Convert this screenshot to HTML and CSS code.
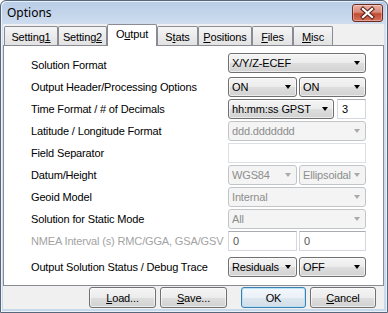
FILE: index.html
```html
<!DOCTYPE html>
<html lang="en">
<head>
    <meta charset="UTF-8">
    <title>Options</title>
    <link rel="stylesheet" href="styles.css">
</head>
<body>
    <div class="window">
        <div class="titlebar">
            <span class="title">Options</span>
            <span class="close">
                <svg width="29" height="16" viewBox="0 0 29 16">
                    <path d="M10 4 L19 12 M19 4 L10 12" stroke="#5a2218" stroke-width="4.2" stroke-linecap="square"/>
                    <path d="M10 4 L19 12 M19 4 L10 12" stroke="#fff" stroke-width="2.2" stroke-linecap="square"/>
                </svg>
            </span>
        </div>
        <div class="client">
            <div class="tabs">
                <div class="tab t-setting1">Setting<u>1</u></div>
                <div class="tab t-setting2">Setting<u>2</u></div>
                <div class="tab t-output active">O<u>u</u>tput</div>
                <div class="tab t-stats">S<u>t</u>ats</div>
                <div class="tab t-positions"><u>P</u>ositions</div>
                <div class="tab t-files"><u>F</u>iles</div>
                <div class="tab t-misc"><u>M</u>isc</div>
            </div>
            <div class="panel">
                <div class="form">
                    <div class="label">Solution Format</div>
                    <div class="combo first"><span>X/Y/Z-ECEF</span><i class="arrow"></i></div>

                    <div class="label">Output Header/Processing Options</div>
                    <div class="pair">
                        <div class="combo half"><span>ON</span><i class="arrow"></i></div>
                        <div class="combo half2"><span>ON</span><i class="arrow"></i></div>
                    </div>

                    <div class="label">Time Format / # of Decimals</div>
                    <div class="pair wide-gap">
                        <div class="combo time"><span>hh:mm:ss GPST</span><i class="arrow"></i></div>
                        <div class="edit small">3</div>
                    </div>

                    <div class="label">Latitude / Longitude Format</div>
                    <div class="combo disabled"><span>ddd.ddddddd</span><i class="arrow"></i></div>

                    <div class="label">Field Separator</div>
                    <div class="edit disabled-edit"></div>

                    <div class="label">Datum/Height</div>
                    <div class="pair">
                        <div class="combo disabled half"><span>WGS84</span><i class="arrow"></i></div>
                        <div class="combo disabled half2"><span>Ellipsoidal</span><i class="arrow"></i></div>
                    </div>

                    <div class="label">Geoid Model</div>
                    <div class="combo disabled"><span>Internal</span><i class="arrow"></i></div>

                    <div class="label">Solution for Static Mode</div>
                    <div class="combo disabled"><span>All</span><i class="arrow"></i></div>

                    <div class="label grey">NMEA Interval (s) RMC/GGA, GSA/GSV</div>
                    <div class="pair">
                        <div class="edit half nmea">0</div>
                        <div class="edit half2 nmea">0</div>
                    </div>

                    <div class="label">Output Solution Status / Debug Trace</div>
                    <div class="pair">
                        <div class="combo half"><span>Residuals</span><i class="arrow"></i></div>
                        <div class="combo half2"><span>OFF</span><i class="arrow"></i></div>
                    </div>
                </div>
            </div>
            <div class="buttons">
                <div class="button b-load"><u>L</u>oad...</div>
                <div class="button b-save"><u>S</u>ave...</div>
                <div class="button b-ok default">OK</div>
                <div class="button b-cancel"><u>C</u>ancel</div>
            </div>
        </div>
    </div>
</body>
</html>
```

FILE: styles.css
```css
body {
    margin: 0;
    font-family: "Liberation Sans", Arial, sans-serif;
    font-size: 11px;
    letter-spacing: -0.15px;
    color: #000;
    background: #fff;
}
.window {
    width: 388px;
    height: 313px;
    box-sizing: border-box;
    border: 1px solid #56667b;
    border-radius: 6px 6px 0 0;
    background: linear-gradient(#b8cce6, #d3e0f0 28px, #c9d9ec);
    box-shadow: inset 1px 1px 0 rgba(255, 255, 255, 0.7), inset -1px -1px 0 rgba(255, 255, 255, 0.6);
    display: flex;
    flex-direction: column;
}
.titlebar {
    height: 23px;
    display: flex;
    justify-content: space-between;
    align-items: flex-start;
    padding: 0 4px 0 6px;
}
.title {
    font-family: "Noto Sans", sans-serif;
    font-size: 12px;
    letter-spacing: 0;
    line-height: 23px;
}
.close {
    margin-top: 3px;
    width: 31px;
    height: 18px;
    box-sizing: border-box;
    border: 1px solid #6e2a1e;
    border-radius: 3px;
    background: linear-gradient(#eab0a2, #d88a78 45%, #c24a32 55%, #d5735c);
    box-shadow: inset 0 0 0 1px rgba(255, 255, 255, 0.35);
}
.close svg {
    display: block;
}
.client {
    flex: 1;
    margin: 0 3px 3px 2px;
    background: #f0f0f0;
    display: flex;
    flex-direction: column;
}
.tabs {
    display: flex;
    align-items: flex-end;
    height: 21px;
    padding-left: 1px;
}
.tab {
    height: 19px;
    box-sizing: border-box;
    border: 1px solid #898c95;
    border-bottom: none;
    border-radius: 2px 2px 0 0;
    background: linear-gradient(#f5f5f5, #e2e2e2);
    display: flex;
    align-items: center;
    justify-content: center;
    padding-top: 1px;
}
.tab.active {
    height: 22px;
    margin-bottom: -1px;
    background: #fff;
    position: relative;
    z-index: 1;
    padding: 0 0 3px;
}
.t-setting1 { width: 54px; }
.t-setting2 { width: 49px; }
.t-output { width: 50px; }
.t-stats { width: 41px; }
.t-positions { width: 54px; }
.t-files { width: 41px; }
.t-misc { width: 40px; }
.panel {
    height: 241px;
    box-sizing: border-box;
    border: 1px solid #898c95;
    background: #fff;
    padding: 9px 0 0 27px;
}
.form {
    display: grid;
    grid-template-columns: 197px 138px;
    grid-template-rows: repeat(9, 20px) 24px;
    row-gap: 2px;
    align-items: end;
}
.label {
    line-height: 20px;
    height: 20px;
    white-space: nowrap;
}
.label.grey {
    color: #a3a3a3;
}
.combo {
    height: 20px;
    box-sizing: border-box;
    border: 1px solid #707070;
    border-radius: 3px;
    background: linear-gradient(#f4f4f4, #ececec 50%, #dedede 50%, #d2d2d2);
    box-shadow: inset 0 0 0 1px rgba(255, 255, 255, 0.6);
    display: flex;
    align-items: center;
    justify-content: space-between;
    padding: 0 5px 0 3px;
}
.combo span {
    overflow: hidden;
    white-space: nowrap;
}
.combo.first {
    margin-bottom: 2px;
}
.arrow {
    flex: none;
    width: 0;
    height: 0;
    border-top: 4px solid #000;
    border-left: 3.5px solid transparent;
    border-right: 3.5px solid transparent;
}
.combo.disabled {
    border-color: #c2c5c8;
    background: #f4f4f4;
    box-shadow: none;
    color: #8d8d8d;
}
.combo.disabled .arrow {
    border-top-color: #a9a9a9;
}
.pair {
    display: flex;
    gap: 2px;
}
.pair.wide-gap {
    gap: 3px;
}
.half { width: 69px; }
.half2 { width: 67px; }
.time { width: 106px; }
.small { width: 29px; }
.edit {
    height: 20px;
    box-sizing: border-box;
    border: 1px solid #d5d9df;
    border-top-color: #abadb3;
    background: #fff;
    padding: 0 4px;
    line-height: 18px;
}
.disabled-edit {
    border-color: #dcdfe3;
}
.nmea {
    color: #555;
}
.buttons {
    display: flex;
    padding: 1px 0 0 86px;
}
.button {
    height: 21px;
    box-sizing: border-box;
    border: 1px solid #707070;
    border-radius: 3px;
    background: linear-gradient(#f4f4f4, #ececec 50%, #dedede 50%, #d2d2d2);
    box-shadow: inset 0 0 0 1px rgba(255, 255, 255, 0.6);
    display: flex;
    align-items: center;
    justify-content: center;
}
.button.default {
    border-color: #3c7fb1;
    background: linear-gradient(#f2f7fb, #eaf1f7 50%, #dde7ef 50%, #d2dde7);
    box-shadow: inset 0 0 0 1px #b6e3f8;
}
.b-load { width: 67px; }
.b-save { width: 67px; margin-left: 4px; }
.b-ok { width: 65px; margin-left: 14px; }
.b-cancel { width: 66px; margin-left: 4px; }
```
